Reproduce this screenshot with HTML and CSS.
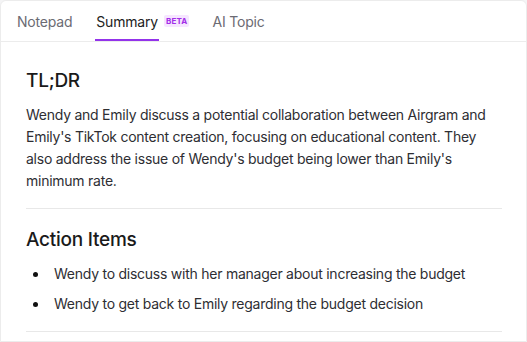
FILE: index.html
```html
<!DOCTYPE html>
<html lang="en">
<head>
    <meta charset="UTF-8">
    <meta name="viewport" content="width=device-width, initial-scale=1.0">
    <title>Summary</title>
    <link rel="stylesheet" href="styles.css">
</head>
<body>

    <div class="panel">
        <div class="tabs">
            <div class="tab"><span class="tab-label">Notepad</span></div>
            <div class="tab active"><span class="tab-label">Summary</span><span class="badge">BETA</span></div>
            <div class="tab"><span class="tab-label">AI Topic</span></div>
        </div>

        <div class="content">
            <div class="section">
                <h2>TL;DR</h2>
                <p>Wendy and Emily discuss a potential collaboration between Airgram and Emily's TikTok content creation, focusing on educational content. They also address the issue of Wendy's budget being lower than Emily's minimum rate.</p>
            </div>
            <div class="section">
                <h2>Action Items</h2>
                <ul>
                    <li>Wendy to discuss with her manager about increasing the budget</li>
                    <li>Wendy to get back to Emily regarding the budget decision</li>
                </ul>
            </div>
        </div>
    </div>

</body>
</html>
```

FILE: styles.css
```css
html, body {
    height: 100%;
}
body {
    margin: 0;
    font-family: Inter, "Noto Sans", sans-serif;
    background-color: #f4f4f5;
    color: #222;
}
.panel {
    box-sizing: border-box;
    min-height: 100%;
    background: #fff;
    border: 1px solid #ececec;
    border-radius: 6px 6px 0 0;
}
.tabs {
    display: flex;
    gap: 22px;
    height: 40px;
    padding: 0 15px;
    border-bottom: 1px solid #ececec;
}
.tab {
    display: flex;
    align-items: stretch;
    font-size: 14px;
    letter-spacing: -0.2px;
    color: #6b6b73;
}
.tab-label {
    display: flex;
    align-items: center;
    border-top: 2px solid transparent;
    border-bottom: 2px solid transparent;
    padding: 0 1px;
}
.tab.active .tab-label {
    color: #222;
    border-bottom-color: #9333ea;
}
.badge {
    align-self: center;
    margin-left: 5px;
    padding: 1px 2px;
    font-size: 8px;
    font-weight: 700;
    letter-spacing: 0.2px;
    line-height: 10px;
    color: #a22ee8;
    background: #f6e6ff;
    border-radius: 2px;
}
.content {
    padding: 8px 24px 0 25px;
}
.section {
    padding: 17px 0 16px;
    border-bottom: 1px solid #e8e8e8;
}
h2 {
    margin: 0 0 9px;
    font-size: 19px;
    font-weight: 500;
    letter-spacing: -0.25px;
    line-height: 28px;
    color: #1a1a1a;
}
p {
    margin: 0;
    font-size: 14px;
    letter-spacing: -0.25px;
    line-height: 22px;
    color: #2e2e33;
}
ul {
    list-style: none;
    margin: 0;
    padding: 0;
}
li {
    display: flex;
    align-items: center;
    font-size: 14px;
    letter-spacing: -0.25px;
    line-height: 22px;
    color: #2e2e33;
}
li + li {
    margin-top: 8px;
}
li::before {
    content: "";
    flex: none;
    width: 5px;
    height: 5px;
    margin: 0 16px 0 7px;
    border-radius: 50%;
    background: #111;
}
```
